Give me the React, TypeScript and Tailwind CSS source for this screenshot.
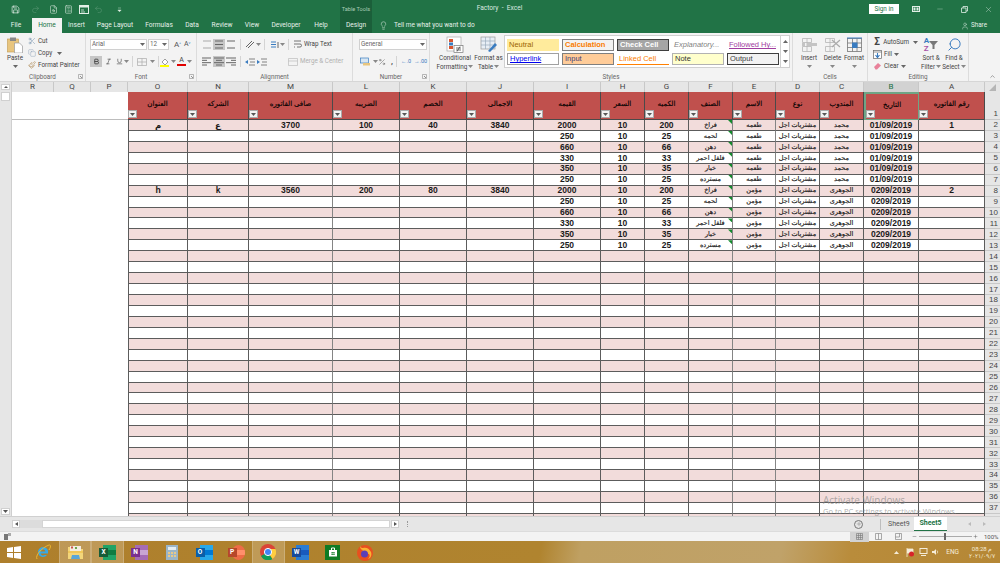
import React from "react";
import { Save, Redo2, Undo2, FileSearch, Calculator, Lightbulb, User, Minus, X, Scissors, Copy, Paintbrush, ChevronUp, Plus, Bold, Italic, Underline, Percent, Search } from "lucide-react";

const GRID = "grid grid-cols-[42px_37px_37px_60px_61px_84px_67px_67px_67px_67px_44px_44px_44px_43px_44px_44px_55px_66px_15px]";
const SANS = "font-['Roboto','Noto_Sans',sans-serif]";
const CELL = "font-['Liberation_Sans','DejaVu_Sans',sans-serif]";

const Caret = ({ c = "#666" }: { c?: string }) => (
  <svg width="5" height="3" viewBox="0 0 5 3" className="shrink-0"><path d="M0 0h5L2.5 3z" fill={c} /></svg>
);

const Lines = ({ rows, c = "#666" }: { rows: [number, number][]; c?: string }) => (
  <svg width="10" height="9" viewBox="0 0 10 9">
    {rows.map(([a, b], i) => (
      <rect key={i} x={a} y={0.5 + (i * 7) / Math.max(rows.length - 1, 1)} width={b - a} height="1" fill={c} />
    ))}
  </svg>
);

const IconBtn = ({ active, children, w = "w-[12px]" }: { active?: boolean; children: React.ReactNode; w?: string }) => (
  <div className={`${w} h-[11px] flex items-center justify-center shrink-0 ${active ? "bg-[#c6c6c6]" : ""}`}>{children}</div>
);

const Sep = () => <div className="w-px h-[11px] bg-[#d4d4d4] mx-[3px] shrink-0" />;

function Group({ w, label, launcher, children }: { w: string; label: string; launcher?: boolean; children: React.ReactNode }) {
  return (
    <div className={`${w} h-full flex flex-col border-r border-[#dcdcdc] shrink-0`}>
      <div className="flex-1 min-h-0">{children}</div>
      <div className="relative h-[9px] pt-[1px] flex items-center justify-center text-[6.3px] leading-none text-[#666]">
        {label}
        {launcher && (
          <svg width="5" height="5" viewBox="0 0 5 5" className="absolute right-[2px] top-[2px]">
            <path d="M0.5 4.5V0.5H4.5V4.5Z" fill="none" stroke="#999" strokeWidth=".7" />
            <path d="M2 2L4 4" stroke="#666" strokeWidth=".7" />
          </svg>
        )}
      </div>
    </div>
  );
}

function Tab({ w, children, active, dim }: { w: string; children: React.ReactNode; active?: boolean; dim?: boolean }) {
  return (
    <div className={`${w} h-full flex items-center justify-center text-[6.6px] leading-none shrink-0 ${active ? "bg-[#f3f3f3] text-[#217346]" : "text-[#e6f1ea]"} ${dim ? "bg-[#1b5f3a]" : ""}`}>
      {children}
    </div>
  );
}

function TitleBar() {
  return (
    <div className={`h-[33px] bg-[#217346] flex flex-col ${SANS}`}>
      <div className="h-[18px] flex">
        <div className="w-[340px] flex items-center text-[#d8e8de]">
          <Save size={9} strokeWidth={1.6} className="ml-[11px]" color="#fff" />
          <Redo2 size={9} strokeWidth={1.5} className="ml-[11px] opacity-30" />
          <FileSearch size={9} strokeWidth={1.5} className="ml-[9px]" />
          <Calculator size={9} strokeWidth={1.5} className="ml-[6px]" />
          <svg width="10" height="9" viewBox="0 0 10 9" className="ml-[6px]"><rect x=".5" y=".5" width="9" height="8" fill="none" stroke="#e2efe7" /><rect x=".5" y=".5" width="9" height="2" fill="#e2efe7" /><path d="M2 5h3M2 7h4" stroke="#e2efe7" strokeWidth=".8" /></svg>
          <Undo2 size={9} strokeWidth={1.5} className="ml-[5px] opacity-30" />
          <svg width="5" height="5" viewBox="0 0 5 5" className="ml-[14px]"><path d="M1 1h3M.8 3h3.4L2.5 4.8z" fill="#e2efe7" stroke="#e2efe7" strokeWidth=".4" /></svg>
        </div>
        <div className="w-[32px] bg-[#1b5f3a] flex items-center justify-center text-[5.6px] text-[#a8cdb6] whitespace-nowrap">Table Tools</div>
        <div className="w-[255px] flex items-center justify-center text-[6.6px] text-[#dbe9e0] whitespace-pre">Factory  -  Excel</div>
        <div className="flex-1 flex items-center justify-end">
          <div className="w-[30px] h-[10px] bg-white text-[#217346] text-[6.3px] leading-none flex items-center justify-center">Sign in</div>
          <svg width="8" height="6" viewBox="0 0 8 6" className="ml-[13px]"><rect x=".5" y=".5" width="7" height="5" fill="none" stroke="#e2efe7" /><rect x="1.5" y="1.5" width="2" height="3" fill="#e2efe7" /><rect x="4.5" y="1.5" width="2" height="3" fill="#e2efe7" /></svg>
          <Minus size={8} strokeWidth={1} color="#e2efe7" className="ml-[16px]" />
          <svg width="7" height="7" viewBox="0 0 7 7" className="ml-[16.5px]"><path d="M.5 2h4.5v4.5H.5zM2 2V.5h4.5V5H5" fill="none" stroke="#e2efe7" strokeWidth=".8" /></svg>
          <X size={9} strokeWidth={1} color="#e2efe7" className="ml-[16px] mr-[7.5px]" />
        </div>
      </div>
      <div className="h-[15px] flex">
        <Tab w="w-[32px]">File</Tab>
        <Tab w="w-[30px]" active>Home</Tab>
        <Tab w="w-[29px]">Insert</Tab>
        <Tab w="w-[48px]">Page Layout</Tab>
        <Tab w="w-[40px]">Formulas</Tab>
        <Tab w="w-[26px]">Data</Tab>
        <Tab w="w-[34px]">Review</Tab>
        <Tab w="w-[26px]">View</Tab>
        <Tab w="w-[42px]">Developer</Tab>
        <Tab w="w-[28px]">Help</Tab>
        <div className="w-[5px]" />
        <Tab w="w-[32px]" dim>Design</Tab>
        <Lightbulb size={9} strokeWidth={1.3} color="#e6f1ea" className="ml-[7px] mt-[3px]" />
        <div className="ml-[6px] text-[6.5px] leading-none text-[#e6f1ea] flex items-center">Tell me what you want to do</div>
        <div className="flex-1 flex items-center justify-end text-[6.3px] text-[#e6f1ea] pr-[13px]">
          <User size={8} strokeWidth={1.3} className="mr-[2px]" />Share
        </div>
      </div>
    </div>
  );
}

function BigBtn({ w, icon, l1, l2, caret2 }: { w: string; icon: React.ReactNode; l1: string; l2?: string; caret2?: boolean }) {
  return (
    <div className={`${w} flex flex-col items-center shrink-0`}>
      <div className="h-[17px] flex items-center justify-center">{icon}</div>
      <div className="mt-[1px] text-[6.3px] leading-[8.5px] text-[#444] whitespace-nowrap">{l1}</div>
      <div className="h-[8.5px] flex items-center gap-[1px] text-[6.3px] leading-[8.5px] text-[#444] whitespace-nowrap">
        {l2}{caret2 && <Caret c="#888" />}
      </div>
    </div>
  );
}

const StyleBox = ({ cls, children }: { cls: string; children: React.ReactNode }) => (
  <div className={`w-[52px] h-[12px] flex items-center pl-[2px] text-[7.5px] leading-none overflow-hidden whitespace-nowrap shrink-0 ${cls}`}>
    {children}
  </div>
);

const CellIcon = ({ op }: { op: "ins" | "del" | "fmt" }) => (
  <svg width="17" height="16" viewBox="0 0 17 16">
    <g fill="none" stroke={op === "fmt" ? "#777" : "#b5b5b5"} strokeWidth=".8">
      {op === "fmt" ? <rect x="1.5" y="1.5" width="14" height="13" /> : <path d="M1.5 1.5h9v4h-9zM1.5 9.5h9v5h-9zM6 1.5v13" />}
      {op === "fmt" && <path d="M1.5 6h14M1.5 10.5h14M6.5 1.5v13M11 1.5v13" />}
    </g>
    {op === "ins" && <><rect x="6" y="6" width="10" height="3" fill="#c4c4c4" /><rect x="1" y="6" width="3" height="3" fill="#c4c4c4" /></>}
    {op === "del" && <path d="M8 3l8 7M16 3l-8 7" stroke="#aaa" strokeWidth="1.2" />}
    {op === "fmt" && <><rect x="6" y="5.5" width="5.5" height="5.5" fill="#3a7cc0" /><path d="M1 1h15" stroke="#3a7cc0" strokeWidth="1" /></>}
  </svg>
);

function Ribbon() {
  return (
    <div className={`h-[49px] bg-[#f3f3f3] border-b border-[#d6d6d6] flex ${SANS}`}>
      <Group w="w-[86px]" label="Clipboard" launcher>
        <div className="flex pt-[4px] pl-[4px]">
          <div className="w-[22px] flex flex-col items-center">
            <svg width="16" height="16" viewBox="0 0 16 16">
              <rect x="0.5" y="2" width="11" height="13" fill="#e8c57e" stroke="#c19a4f" strokeWidth=".6" />
              <rect x="3" y="0.5" width="6" height="3.5" fill="#888" />
              <path d="M7.5 6h5l3 3v7h-8z" fill="#fff" stroke="#999" strokeWidth=".7" />
            </svg>
            <div className="mt-[1px] text-[6.3px] leading-[9px] text-[#444]">Paste</div>
            <div className="mt-[2px]"><Caret /></div>
          </div>
          <div className="ml-[2px] -mt-[1px] flex flex-col gap-[1.5px] text-[6.3px] leading-none text-[#444]">
            <div className="h-[10.5px] flex items-center gap-[2px]"><Scissors size={8} strokeWidth={1.2} color="#55799c" />Cut</div>
            <div className="h-[10.5px] flex items-center gap-[2px]"><Copy size={8} strokeWidth={1.2} color="#7d95ad" />Copy<span className="ml-[3px]"><Caret /></span></div>
            <div className="h-[10.5px] flex items-center gap-[2px] whitespace-nowrap"><Paintbrush size={8} strokeWidth={1.4} color="#a3763a" />Format Painter</div>
          </div>
        </div>
      </Group>
      <Group w="w-[111px]" label="Font" launcher>
        <div className="pt-[6px] pl-[4px]">
          <div className="flex items-center">
            <div className="w-[57px] h-[11px] bg-white border border-[#d0d0d0] flex items-center justify-between px-[1px] text-[6.3px] text-[#666]">Arial<Caret /></div>
            <div className="ml-[1px] w-[21px] h-[11px] bg-white border border-[#d0d0d0] flex items-center justify-between px-[1px] text-[6.3px] text-[#666]">12<Caret /></div>
            <div className="ml-[5px] text-[8px] leading-none text-[#555]">A<sup className="text-[4px] text-[#3a7cc0]">^</sup></div>
            <div className="ml-[3px] text-[7px] leading-none text-[#555]">A<sup className="text-[4px] text-[#3a7cc0]">v</sup></div>
          </div>
          <div className="flex items-center mt-[6px]">
            <IconBtn active><Bold size={7} strokeWidth={3} color="#444" /></IconBtn>
            <IconBtn><Italic size={7} strokeWidth={2} color="#444" /></IconBtn>
            <div className="w-[10px] flex justify-center"><Underline size={7} strokeWidth={2} color="#444" /></div>
            <Caret c="#888" />
            <Sep />
            <svg width="10" height="8" viewBox="0 0 10 8" className="ml-[1px]"><path d="M.5.5h9v7h-9zM5 .5v7M.5 4h9" fill="none" stroke="#aaa" strokeWidth=".7" /></svg>
            <span className="ml-[3px]"><Caret c="#888" /></span>
            <Sep />
            <svg width="10" height="10" viewBox="0 0 10 10" className="-ml-[2px]"><path d="M2 5l3-3 3 3-3 3z" fill="#fff" stroke="#777" strokeWidth=".7" /><rect x="0" y="8" width="9" height="2" fill="#ffff00" /></svg>
            <span className="ml-[1px]"><Caret c="#888" /></span>
            <div className="ml-[1px] w-[9px] flex flex-col items-center text-[7px] leading-[7px] text-[#444]">A<div className="w-[9px] h-[2px] bg-[#e00000]" /></div>
            <span className="ml-[1px]"><Caret c="#888" /></span>
          </div>
        </div>
      </Group>
      <Group w="w-[156px]" label="Alignment">
        <div className="pt-[6px] pl-[4px]">
          <div className="flex items-center">
            <IconBtn><Lines rows={[[1, 9], [1, 9]]} c="#aaa" /></IconBtn>
            <IconBtn active><Lines rows={[[1, 9], [1, 9], [1, 9]]} /></IconBtn>
            <IconBtn><Lines rows={[[1, 9], [1, 9]]} /></IconBtn>
            <Sep />
            <IconBtn><svg width="10" height="9" viewBox="0 0 10 9"><path d="M1 7l6-6M3 8l6-6" stroke="#666" strokeWidth="1" /></svg></IconBtn>
            <Caret c="#888" />
            <Sep />
            <IconBtn><svg width="9" height="8" viewBox="0 0 9 8"><path d="M1 1h5M1 3.5h5M1 6h5" stroke="#3a7cc0" strokeWidth="1" /><path d="M8 1v6" stroke="#666" /></svg></IconBtn>
            <Caret c="#888" />
            <Sep />
            <svg width="9" height="9" viewBox="0 0 9 9" className="ml-[1px]"><path d="M1 1h7M1 4h6a1.5 1.5 0 010 3H4M1 7h1" fill="none" stroke="#666" strokeWidth=".9" /></svg>
            <span className="ml-[2px] text-[6.3px] leading-none text-[#444] whitespace-nowrap">Wrap Text</span>
          </div>
          <div className="flex items-center mt-[6px]">
            <IconBtn><Lines rows={[[0, 9], [0, 5], [0, 9], [0, 5]]} /></IconBtn>
            <IconBtn active><Lines rows={[[0, 10], [2, 8], [0, 10], [2, 8]]} /></IconBtn>
            <IconBtn><Lines rows={[[0, 10], [5, 10], [0, 10], [5, 10]]} /></IconBtn>
            <Sep />
            <IconBtn><svg width="10" height="8" viewBox="0 0 10 8"><path d="M4 1h6M4 7h6M5 4H10" stroke="#666" strokeWidth=".8" /><path d="M3 2L0 4l3 2z" fill="#3a7cc0" /></svg></IconBtn>
            <IconBtn><svg width="10" height="8" viewBox="0 0 10 8"><path d="M4 1h6M4 7h6M5 4H10" stroke="#666" strokeWidth=".8" /><path d="M0 2l3 2-3 2z" fill="#3a7cc0" /></svg></IconBtn>
            <div className="w-[20px]" />
            <svg width="10" height="8" viewBox="0 0 10 8"><path d="M.5.5h9v7h-9zM.5 3h9" fill="none" stroke="#bbb" strokeWidth=".7" /></svg>
            <span className="ml-[2px] text-[6.3px] leading-none text-[#b0b0b0] whitespace-nowrap">Merge &amp; Center</span>
          </div>
        </div>
      </Group>
      <Group w="w-[77px]" label="Number" launcher>
        <div className="pt-[6px] pl-[6px]">
          <div className="w-[68px] h-[11px] bg-white border border-[#d0d0d0] flex items-center justify-between px-[1px] text-[6.3px] text-[#666]">General<Caret /></div>
          <div className="flex items-center mt-[6px] text-[#555]">
            <svg width="11" height="9" viewBox="0 0 11 9" className="ml-[1px]"><rect x=".5" y="1" width="8" height="5" fill="#d8e6f2" stroke="#3a7cc0" strokeWidth=".7" /><rect x="3" y="6" width="7" height="2.5" fill="#e8c57e" /></svg>
            <span className="ml-[2px]"><Caret c="#888" /></span>
            <Percent size={8} strokeWidth={1.4} />
            <span className="ml-[5px] text-[8px] leading-none font-bold">,</span>
            <Sep />
            <span className="ml-[1px] text-[5.5px] leading-none text-[#3a7cc0] whitespace-nowrap">←.0</span>
            <span className="ml-[3px] text-[5.5px] leading-none text-[#3a7cc0] whitespace-nowrap">→.00</span>
          </div>
        </div>
      </Group>
      <Group w="w-[363px]" label="Styles">
        <div className="flex pt-[3px] pl-[2px]">
          <BigBtn w="w-[44px] ml-[1px]" l1="Conditional" l2="Formatting" caret2 icon={
            <svg width="18" height="17" viewBox="0 0 18 17"><rect x="1" y="1" width="14" height="14" fill="#fff" stroke="#aaa" strokeWidth=".7" /><rect x="3" y="3" width="4" height="3" fill="#d8552f" /><rect x="3" y="6.5" width="4" height="3" fill="#3a7cc0" /><rect x="3" y="10" width="4" height="3" fill="#d8552f" /><rect x="8" y="9.5" width="9" height="7" fill="#fff" stroke="#777" strokeWidth=".7" /><path d="M10 12h5M10 14h5M14 10.5l-3 5" stroke="#333" strokeWidth=".7" /></svg>
          } />
          <BigBtn w="w-[27px] -ml-[2px]" l1="Format as" l2="Table" caret2 icon={
            <svg width="18" height="17" viewBox="0 0 18 17"><rect x="1" y="1" width="14" height="12" fill="#e8eef5" stroke="#999" strokeWidth=".7" /><path d="M1 5h14M1 9h14M5.5 1v12M10 1v12" stroke="#9ab" strokeWidth=".7" /><path d="M8 15l7-8 2 2-7 7z" fill="#3a7cc0" /></svg>
          } />
          <div className="ml-[2px] w-[286px] h-[33px] bg-white border border-[#d0d0d0] flex -mt-[1px] shrink-0">
            <div className="flex flex-col gap-[2px] pl-[2px] pt-[3px] flex-1 min-w-0">
              <div className="flex gap-[3px] font-['Liberation_Sans',sans-serif]">
                <StyleBox cls="bg-[#ffeb9c] text-[#9c6500]">Neutral</StyleBox>
                <StyleBox cls="bg-[#f2f2f2] text-[#fa7d00] font-bold border border-[#7f7f7f]">Calculation</StyleBox>
                <StyleBox cls="bg-[#a5a5a5] text-white font-bold border border-[#3f3f3f]">Check Cell</StyleBox>
                <StyleBox cls="text-[#7f7f7f] italic">Explanatory...</StyleBox>
                <StyleBox cls="text-[#a03da0] underline">Followed Hy...</StyleBox>
              </div>
              <div className="flex gap-[3px] font-['Liberation_Sans',sans-serif]">
                <StyleBox cls="bg-white text-[#0000ee] underline border border-[#a0a0a0]">Hyperlink</StyleBox>
                <StyleBox cls="bg-[#ffcc99] text-[#3f3f76] border border-[#7f7f7f]">Input</StyleBox>
                <StyleBox cls="text-[#fa7d00] border-b border-[#ff8001]">Linked Cell</StyleBox>
                <StyleBox cls="bg-[#ffffcc] text-[#333] border border-[#b2b2b2]">Note</StyleBox>
                <StyleBox cls="bg-[#f2f2f2] text-[#3f3f3f] border border-[#3f3f3f]">Output</StyleBox>
              </div>
            </div>
            <div className="w-[9px] flex flex-col shrink-0 border-l border-[#d0d0d0] items-center justify-around">
              <svg width="5" height="3" viewBox="0 0 5 3"><path d="M0 3h5L2.5 0z" fill="#666" /></svg>
              <Caret />
              <Caret />
            </div>
          </div>
        </div>
      </Group>
      <Group w="w-[75px]" label="Cells">
        <div className="flex pt-[3px] pl-[4px]">
          <BigBtn w="w-[24px]" l1="Insert" caret2 icon={<CellIcon op="ins" />} />
          <BigBtn w="w-[23px]" l1="Delete" caret2 icon={<CellIcon op="del" />} />
          <BigBtn w="w-[20px]" l1="Format" caret2 icon={<CellIcon op="fmt" />} />
        </div>
      </Group>
      <Group w="w-[101px]" label="Editing">
        <div className="flex pt-[3px] pl-[5px]">
          <div className="w-[45px] flex flex-col text-[6.3px] leading-none text-[#444]">
            <div className="h-[12px] flex items-center gap-[2px] whitespace-nowrap"><span className="w-[9px] text-[10px] font-bold text-[#444] leading-none text-center">Σ</span>AutoSum<span className="ml-[2px]"><Caret /></span></div>
            <div className="h-[12px] flex items-center gap-[2px]">
              <svg width="9" height="9" viewBox="0 0 9 9"><rect x=".5" y=".5" width="8" height="8" fill="#fff" stroke="#666" strokeWidth=".7" /><path d="M.5 2h8" stroke="#666" strokeWidth=".7" /><path d="M4.5 3v4M2.5 5l2 2.5 2-2.5" fill="none" stroke="#3a7cc0" strokeWidth="1.1" /></svg>
              Fill<Caret />
            </div>
            <div className="h-[12px] flex items-center gap-[2px]">
              <svg width="9" height="8" viewBox="0 0 9 8"><path d="M1 5l4-4 3 2.5L4 7.5H2.5z" fill="#e8819a" /></svg>
              Clear<Caret />
            </div>
          </div>
          <BigBtn w="w-[24px] ml-[1px]" l1="Sort &amp;" l2="Filter" caret2 icon={
            <div className="flex items-center leading-[8px] text-[8px] font-bold"><div className="flex flex-col"><span className="text-[#3a7cc0]">A</span><span className="text-[#a855a8]">Z</span></div>
            <svg width="9" height="8" viewBox="0 0 9 8"><path d="M0 0h9L5.5 4v4h-2V4z" fill="#777" /></svg></div>
          } />
          <BigBtn w="w-[22px]" l1="Find &amp;" l2="Select" caret2 icon={<Search size={15} strokeWidth={1.6} color="#3a7cc0" className="-scale-x-100" />} />
        </div>
      </Group>
      <div className="flex-1 flex items-end justify-end pr-[4px] pb-[1px]"><ChevronUp size={7} color="#666" /></div>
    </div>
  );
}

const LETTERS = ["O", "N", "M", "L", "K", "J", "I", "H", "G", "F", "E", "D", "C", "B", "A"];
const HEAD = ["العنوان", "الشركه", "صافى الفاتوره", "الضريبه", "الخصم", "الاجمالى", "القيمه", "السعر", "الكميه", "الصنف", "الاسم", "نوع", "المندوب", "التاريخ", "رقم الفاتوره"];
const ITEMS: [string, string, string][] = [
  ["2000", "200", "فراخ"],
  ["250", "25", "لحمه"],
  ["660", "66", "دهن"],
  ["330", "33", "فلفل احمر"],
  ["350", "35", "خيار"],
  ["250", "25", "مسترده"],
];

function rowData(n: number): string[] {
  const e = Array(15).fill("");
  if (n >= 2 && n <= 13) {
    const first = n <= 7;
    const it = ITEMS[(n - 2) % 6];
    e[6] = it[0]; e[7] = "10"; e[8] = it[1]; e[9] = it[2];
    e[10] = first ? "طعمه" : "مؤمن";
    e[11] = "مشتريات اجل";
    e[12] = first ? "محمد" : "الجوهرى";
    e[13] = first ? "01/09/2019" : "0209/2019";
  }
  if (n === 2) { e[0] = "م"; e[1] = "ع"; e[2] = "3700"; e[3] = "100"; e[4] = "40"; e[5] = "3840"; e[14] = "1"; }
  if (n === 8) { e[0] = "h"; e[1] = "k"; e[2] = "3560"; e[3] = "200"; e[4] = "80"; e[5] = "3840"; e[14] = "2"; }
  return e;
}

function Sheet() {
  const rows = Array.from({ length: 37 }, (_, i) => i + 2);
  return (
    <div className="h-[434px] flex overflow-hidden">
      <div className="w-[12px] bg-[#e6e6e6] flex flex-col items-center justify-between pt-[2px] pb-[1px] border-r border-[#cfcfcf] shrink-0">
        <div className="flex flex-col items-center">
          <div className="w-[9px] h-[6px] bg-white border border-[#d0d0d0] flex items-center justify-center"><svg width="4" height="2" viewBox="0 0 4 2"><path d="M0 2h4L2 0z" fill="#555" /></svg></div>
          <div className="w-[9px] h-[9px] mt-[2px] bg-white border border-[#d0d0d0]" />
        </div>
        <div className="w-[9px] h-[7px] bg-white border border-[#d0d0d0] flex items-center justify-center"><Caret c="#555" /></div>
      </div>
      <div className={`flex-1 min-w-0 ${CELL}`}>
        <div className={`${GRID} h-[10px] bg-[#e6e6e6] text-[8px] leading-[10px] text-[#444] text-center ${SANS}`}>
          {["R", "Q", "P"].map((l) => <div key={l} className="border-r border-[#c8c8c8]">{l}</div>)}
          {LETTERS.map((l) => (
            <div key={l} className={l === "B" ? "bg-[#d2d2d2] text-[#217346] border-b border-[#217346] border-r border-r-[#c8c8c8]" : "border-r border-[#c8c8c8]"}>{l}</div>
          ))}
          <div className="flex items-center justify-center"><svg width="7" height="7" viewBox="0 0 7 7"><path d="M7 0v7H0z" fill="#b5b5b5" /></svg></div>
        </div>
        <div className={`${GRID} h-[28px]`}>
          <div className="col-span-3 bg-white border-b border-[#bdbdbd]" />
          {HEAD.map((h, i) => (
            <div key={i} className={`relative flex items-center justify-center pb-[3px] bg-[#c0504d] border-r border-b border-[#4a4a4a] text-[7px] [-webkit-text-stroke:0.15px_#000] text-black ${i === 13 ? "border-2 border-[#6fa585]" : ""}`} dir="rtl">
              <span className="whitespace-nowrap">{h}</span>
              <span className="absolute left-[0px] bottom-[1px] w-[9px] h-[8px] bg-[#f3f3f3] border border-[#aaa] flex items-center justify-center"><Caret c="#555" /></span>
            </div>
          ))}
          <div className="bg-[#e6e6e6] border-b border-[#c8c8c8] flex items-end justify-end pr-[2px] text-[8px] leading-[11px] text-[#444]">1</div>
        </div>
        {rows.map((n) => {
          const pink = n % 2 === 0;
          const d = rowData(n);
          return (
            <div key={n} className={`${GRID} h-[10.95px]`}>
              <div className="col-span-3 bg-white" />
              {d.map((v, i) => (
                <div key={i} className={`relative flex items-center justify-center box-border border-r border-b border-[#5c5c5c] leading-none whitespace-nowrap overflow-hidden ${i === 0 ? "border-l" : ""} ${i === 2 || i === 9 || i === 10 ? "border-r-[#858585]" : ""} ${pink ? "bg-[#f2dcdb]" : "bg-white"} ${i >= 9 && i <= 12 ? "text-[6.5px] [-webkit-text-stroke:0.15px_#111]" : "text-[8.5px] font-bold"} text-[#1a1a1a]`}>
                  {v}
                  {i === 9 && v && <span className="absolute top-0 right-0 w-[4px] h-[4px] bg-[#128a2c] [clip-path:polygon(0_0,100%_0,100%_100%)]" />}
                </div>
              ))}
              <div className="bg-[#e6e6e6] border-b border-[#c8c8c8] flex items-center justify-end pr-[2px] pt-[1px] text-[8px] leading-none text-[#444]">{n < 38 ? n : ""}</div>
            </div>
          );
        })}
      </div>
    </div>
  );
}

function SheetBar() {
  return (
    <div className={`h-[15px] bg-[#e6e6e6] flex items-center border-t border-[#d0d0d0] ${SANS}`}>
      <div className="ml-[12px] w-[8px] h-[8px] bg-white border border-[#d0d0d0] flex items-center justify-center"><svg width="3" height="4" viewBox="0 0 3 4"><path d="M3 0v4L0 2z" fill="#555" /></svg></div>
      <div className="w-[22px] h-[8px] bg-[#dcdcdc]" />
      <div className="w-[348px] h-[8px] bg-white border border-[#d4d4d4]" />
      <div className="ml-[1px] w-[8px] h-[8px] bg-white border border-[#d0d0d0] flex items-center justify-center"><svg width="3" height="4" viewBox="0 0 3 4"><path d="M0 0v4l3-2z" fill="#555" /></svg></div>
      <div className="ml-[8px] w-px h-[6px] border-l border-dotted border-[#999]" />
      <div className="flex-1" />
      <div className="w-[9px] h-[9px] rounded-full border border-[#777] flex items-center justify-center"><Plus size={6} strokeWidth={1.5} color="#666" /></div>
      <div className="ml-[17px] w-px h-[11px] bg-[#bdbdbd]" />
      <div className="ml-[7px] w-[26px] text-[7px] leading-none text-[#555]">Sheet9</div>
      <div className="w-[33px] h-[14px] bg-white border-b border-[#217346] flex items-center justify-center text-[7px] font-bold text-[#217346]">Sheet5</div>
      <svg width="3" height="4" viewBox="0 0 3 4" className="ml-[21px]"><path d="M3 0v4L0 2z" fill="#bbb" /></svg>
      <svg width="3" height="4" viewBox="0 0 3 4" className="ml-[12px] mr-[14px]"><path d="M0 0v4l3-2z" fill="#bbb" /></svg>
    </div>
  );
}

function StatusBar() {
  return (
    <div className={`h-[10px] bg-[#f3f3f3] border-t border-[#dcdcdc] flex items-center ${SANS}`}>
      <svg width="7" height="7" viewBox="0 0 7 7" className="ml-[4px]"><rect x="0" y="1" width="4" height="6" fill="#777" /><rect x="4" y="0" width="3" height="3" fill="#aaa" /></svg>
      <div className="flex-1" />
      <div className="w-[19px] h-[10px] bg-[#d2d2d2] flex items-center justify-center">
        <svg width="7" height="7" viewBox="0 0 7 7"><path d="M.5.5h6v6h-6zM2.5.5v6M4.5.5v6M.5 2.5h6M.5 4.5h6" fill="none" stroke="#777" strokeWidth=".6" /></svg>
      </div>
      <svg width="7" height="7" viewBox="0 0 7 7" className="ml-[6px]"><path d="M.5.5h6v6h-6zM3.5.5v6" fill="none" stroke="#888" strokeWidth=".7" /></svg>
      <svg width="7" height="7" viewBox="0 0 7 7" className="ml-[13px]"><path d="M.5.5h6v6h-6zM.5 4h4V.5" fill="none" stroke="#888" strokeWidth=".7" /></svg>
      <Minus size={5} strokeWidth={2} color="#555" className="ml-[10px]" />
      <div className="relative w-[53px] h-px ml-[2px] bg-[#aaa]">
        <div className="absolute left-[25px] -top-[3px] w-[2px] h-[7px] bg-[#666]" />
      </div>
      <Plus size={5} strokeWidth={2} color="#555" className="ml-[1px]" />
      <div className="ml-[6px] mr-[3px] w-[13px] text-[6px] leading-none text-[#555] whitespace-nowrap">100%</div>
    </div>
  );
}

const App1 = ({ children, active }: { children: React.ReactNode; active?: boolean }) => (
  <div className={`w-[32.2px] h-[22px] flex items-center justify-center shrink-0 ${active ? "bg-[#ffffff33] border-x border-[#ffffff33]" : ""}`}>{children}</div>
);

function OfficeIcon({ bg, back, mid, letter, round }: { bg: string; back: string; mid: string; letter: string; round?: boolean }) {
  return (
    <div className="relative w-[17px] h-[15px]">
      <div className={`absolute left-[4px] top-0 w-[13px] h-[15px] overflow-hidden ${round ? "rounded-full" : ""}`} style={{ background: back }}>
        <div className="absolute left-0 top-[5px] w-full h-[5px]" style={{ background: mid }} />
      </div>
      <div className="absolute left-0 top-[3px] w-[9px] h-[9px] flex items-center justify-center text-white text-[6.5px] font-bold leading-none" style={{ background: bg }}>{letter}</div>
    </div>
  );
}

function Taskbar() {
  return (
    <div className={`h-[22px] flex items-center bg-[linear-gradient(100deg,#ae7f2c_0%,#b0842f_54%,#bfa062_58%,#c0a269_78%,#b98c3b_85%,#b58735_100%)] ${SANS}`}>
      <div className="w-[27px] flex justify-center shrink-0">
        <svg width="14" height="13" viewBox="0 0 14 13"><path d="M0 2l6-1v5H0zM7 1l7-1v6H7zM0 7h6v5l-6-1zM7 7h7v6l-7-1z" fill="#fff" /></svg>
      </div>
      <App1>
        <svg width="16" height="16" viewBox="0 0 16 16">
          <path d="M8 3a5 5 0 00-5 5.500 5 5 0 009 2.500h-2.500a2.600 2.600 0 01-4-1.500H13A5 5 0 008 3zM5.500 7.500a2.600 2.600 0 015 0z" fill="#38a9e6" />
          <path d="M2 15C0 12 6 4 14 1c2-.5 2 2 0 5" fill="none" stroke="#eeb62f" strokeWidth="1" />
        </svg>
      </App1>
      <App1 active>
        <svg width="17" height="15" viewBox="0 0 17 15"><path d="M1 2h6l1 2h8v10H1z" fill="#f4d67a" /><rect x="3" y="1" width="11" height="5" fill="#f3ece0" /><rect x="4" y="1.500" width="2" height="2" fill="#c9534a" /><rect x="8" y="2" width="2" height="2" fill="#6aa84f" /><path d="M1 6h15v2H1z" fill="#f1c75a" /><path d="M5 10h7l1 4H4z" fill="#5aa5d8" /></svg>
      </App1>
      <App1 active><OfficeIcon bg="#185c37" back="#21a366" mid="#107c41" letter="X" /></App1>
      <App1><OfficeIcon bg="#7a2f8f" back="#a56cb5" mid="#c9a5d3" letter="N" /></App1>
      <App1>
        <svg width="12" height="15" viewBox="0 0 12 15"><rect width="12" height="15" fill="#9bb5c8" /><rect x="2" y="2" width="8" height="3" fill="#e4edf3" /><path d="M2 7h2v2H2zM5 7h2v2H5zM8 7h2v2H8zM2 10h2v2H2zM5 10h2v2H5zM8 10h2v2H8z" fill="#e8c98a" /></svg>
      </App1>
      <App1><OfficeIcon bg="#0a5ea8" back="#28a8ea" mid="#0078d4" letter="O" /></App1>
      <App1><OfficeIcon bg="#b7472a" back="#ed6c47" mid="#ff8f6b" letter="P" round /></App1>
      <App1 active>
        <svg width="16" height="16" viewBox="0 0 16 16">
          <circle cx="8" cy="8" r="8" fill="#db4437" />
          <path d="M8 8L1 12a8 8 0 0011.500 3z" fill="#0f9d58" />
          <path d="M8 8l4.500 7A8 8 0 0015.500 5H8z" fill="#ffcd40" />
          <circle cx="8" cy="8" r="3.600" fill="#4285f4" stroke="#fff" strokeWidth="1" />
        </svg>
      </App1>
      <App1><OfficeIcon bg="#1a4a9a" back="#2b7cd3" mid="#185abd" letter="W" /></App1>
      <App1>
        <div className="w-[15px] h-[15px] bg-[#0f7b24] flex items-center justify-center"><svg width="10" height="10" viewBox="0 0 10 10"><path d="M1 3h8v6.500H1z" fill="#fff" /><path d="M3.500 3V1h3v2" fill="none" stroke="#fff" /><path d="M3.500 5h1.300v1.300H3.500zM5.300 5h1.300v1.300H5.300zM3.500 6.800h1.300v1.300H3.500zM5.300 6.800h1.300v1.300H5.300z" fill="#0f7b24" /></svg></div>
      </App1>
      <App1>
        <svg width="16" height="17" viewBox="0 0 16 17"><circle cx="8" cy="9" r="8" fill="#e8501f" /><path d="M3 2c1 2 2 2 3 2 3-1 6 0 8 4 1 3 0 6-3 7 2-2 2-4 1-5-1-.500-4 0-6-1-1-1-1-2 0-3-2 0-3-2-3-4z" fill="#f9b233" /><circle cx="7.500" cy="10" r="3.500" fill="#5a3eb8" /></svg>
      </App1>
      <div className="flex-1" />
      <div className="flex items-center text-[#f5ecd8]">
        <svg width="5" height="3" viewBox="0 0 5 3"><path d="M0 3h5L2.500 0z" fill="#f5ecd8" /></svg>
        <svg width="8" height="9" viewBox="0 0 8 9" className="ml-[7px]"><path d="M1 0v9M1 1h6v4H1" fill="#f5ecd8" stroke="#f5ecd8" strokeWidth=".8" /><circle cx="5.500" cy="6" r="2.500" fill="#d8232a" /></svg>
        <svg width="9" height="8" viewBox="0 0 9 8" className="ml-[5px]"><rect x="1" y="0.500" width="7" height="5" fill="none" stroke="#f5ecd8" /><path d="M2 7.500h5" stroke="#f5ecd8" /></svg>
        <svg width="7" height="8" viewBox="0 0 7 8" className="ml-[4px]"><path d="M0 3h2l2-2v6L2 5H0z" fill="#f5ecd8" /><path d="M5 2.500a2 2 0 010 3" fill="none" stroke="#f5ecd8" strokeWidth=".7" /></svg>
        <span className="ml-[7px] text-[6.5px] leading-none">ENG</span>
        <div className="ml-[9px] mr-[4px] w-[28px] flex flex-col items-center text-[6px] leading-[7.5px] whitespace-nowrap">
          <span>08:28 م</span>
          <span>٢٠٢١/٠٩/٧</span>
        </div>
      </div>
    </div>
  );
}

export default function App() {
  return (
    <div className="relative w-[1000px] h-[563px] overflow-hidden bg-white">
      <TitleBar />
      <Ribbon />
      <Sheet />
      <SheetBar />
      <StatusBar />
      <Taskbar />
      <div className="absolute left-[823px] top-[495px] text-[#8a8a8a]/70 text-[10px] leading-none whitespace-nowrap font-['Open_Sans',sans-serif]">
        Activate Windows
        <div className="mt-[3px] text-[7.5px]">Go to PC settings to activate Windows.</div>
      </div>
    </div>
  );
}
